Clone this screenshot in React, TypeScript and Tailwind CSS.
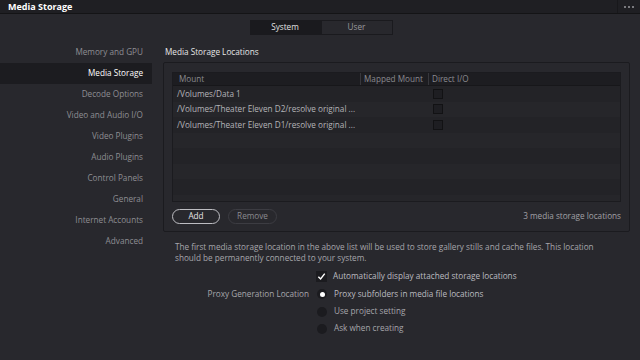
import React from "react";

const sidebarItems = [
  "Memory and GPU",
  "Media Storage",
  "Decode Options",
  "Video and Audio I/O",
  "Video Plugins",
  "Audio Plugins",
  "Control Panels",
  "General",
  "Internet Accounts",
  "Advanced",
];

const mounts = [
  "/Volumes/Data 1",
  "/Volumes/Theater Eleven D2/resolve original ...",
  "/Volumes/Theater Eleven D1/resolve original ...",
];

// radio / checkbox for the options block
const Radio: React.FC<{ on?: boolean }> = ({ on }) => (
  <span className="w-[10px] h-[10px] rounded-full bg-[#1b1b1f] flex items-center justify-center">
    {on && <span className="w-[5px] h-[5px] rounded-full bg-white" />}
  </span>
);

const App: React.FC = () => {
  return (
    <div
      className="w-[640px] h-[360px] bg-[#28282d] flex flex-col overflow-hidden text-[8.2px] leading-none"
      style={{ fontFamily: '"Open Sans", sans-serif' }}
    >
      {/* Title bar */}
      <div className="h-[14px] bg-[#1f1f23] border-b border-[#141416] flex items-center justify-between">
        <span className="pl-[8px] text-[9px] font-bold text-white">Media Storage</span>
        <div className="h-full w-[23px] border-l border-[#18181b] flex items-center justify-center gap-[2px]">
          <span className="w-[2px] h-[2px] rounded-full bg-[#9a9a9e]" />
          <span className="w-[2px] h-[2px] rounded-full bg-[#9a9a9e]" />
          <span className="w-[2px] h-[2px] rounded-full bg-[#9a9a9e]" />
        </div>
      </div>

      {/* Tabs */}
      <div className="flex justify-center mt-[6px] pl-[2px]">
        <div className="w-[71px] h-[15px] bg-[#1a1a1e] text-[#e0e0e0] flex items-center justify-center">System</div>
        <div className="w-[72px] h-[15px] border border-[#1a1a1e] text-[#9a9a9e] flex items-center justify-center">User</div>
      </div>

      <div className="flex mt-[6px]">
        {/* Sidebar */}
        <div className="w-[152px] pt-[1px] flex flex-col">
          {sidebarItems.map((s) => (
            <div
              key={s}
              className={
                s === "Media Storage"
                  ? "h-[21px] flex items-center justify-end pr-[9px] bg-[#1c1c20] text-white"
                  : "h-[21px] flex items-center justify-end pr-[9px] text-[#8e8e93]"
              }
            >
              {s}
            </div>
          ))}
        </div>

        {/* Content */}
        <div className="flex-1 pl-[11px] pr-[10px]">
          <div className="h-[21px] pt-[2px] flex items-center pl-[2px] text-[#e6e6e6]">Media Storage Locations</div>
          <div className="w-[467px] h-[170px] border border-[#1b1b1f] rounded-[2px] px-[8px] pt-[9px]">
            <div className="h-[130px] bg-[#222226] border border-[#1b1b1f] flex flex-col overflow-hidden">
              <div className="h-[13px] shrink-0 bg-[#1d1d21] border-b border-[#17171a] flex text-[#8a8a8f]">
                <div className="w-[188px] pl-[6px] flex items-center border-r border-[#37373c]">Mount</div>
                <div className="w-[68px] pl-[3px] flex items-center border-r border-[#37373c]">Mapped Mount</div>
                <div className="pl-[3px] flex items-center">Direct I/O</div>
              </div>
              {Array.from({ length: 8 }).map((_, i) => (
                <div
                  key={i}
                  className={
                    i % 2 === 0
                      ? "h-[15.5px] shrink-0 flex items-center bg-[#232327] text-[#b4b4b8]"
                      : "h-[15.5px] shrink-0 flex items-center bg-[#26262a] text-[#b4b4b8]"
                  }
                >
                  <div className="w-[188px] pl-[4px] whitespace-nowrap">{mounts[i] ?? ""}</div>
                  <div className="w-[68px]" />
                  {i < 3 && <span className="ml-[4px] w-[10px] h-[10px] bg-[#1e1e22] border border-[#121214]" />}
                </div>
              ))}
            </div>
            <div className="flex items-center mt-[7px]">
              <div className="w-[48px] h-[15px] rounded-full border border-[#bdbdc2] text-[#e6e6e6] flex items-center justify-center">Add</div>
              <div className="ml-[8px] w-[49px] h-[15px] rounded-full border border-[#3c3c42] text-[#8a8a8f] flex items-center justify-center">Remove</div>
              <div className="ml-auto text-[#a0a0a5]">3 media storage locations</div>
            </div>
          </div>

          <div className="pl-[12px] mt-[9px] text-[#a6a6ab] leading-[11px]">
            The first media storage location in the above list will be used to store gallery stills and cache files. This location
            <br />
            should be permanently connected to your system.
          </div>

          <div className="mt-[4px] flex flex-col">
            <div className="h-[18px] flex items-center">
              <div className="w-[153px]" />
              <span className="w-[11px] h-[11px] bg-[#1b1b1f] flex items-center justify-center">
                <svg width="9" height="9" viewBox="0 0 10 10">
                  <path d="M1.5 5.2 L4 7.8 L8.6 1.8" fill="none" stroke="#fff" strokeWidth="1.6" />
                </svg>
              </span>
              <span className="ml-[6px] text-[#bcbcc0]">Automatically display attached storage locations</span>
            </div>
            <div className="h-[18px] flex items-center">
              <div className="w-[146px] text-right text-[#a6a6ab]">Proxy Generation Location</div>
              <div className="w-[8px]" />
              <Radio on />
              <span className="ml-[7px] text-[#bcbcc0]">Proxy subfolders in media file locations</span>
            </div>
            <div className="h-[17px] flex items-center">
              <div className="w-[154px]" />
              <Radio />
              <span className="ml-[7px] text-[#a6a6ab]">Use project setting</span>
            </div>
            <div className="h-[17px] flex items-center">
              <div className="w-[154px]" />
              <Radio />
              <span className="ml-[7px] text-[#a6a6ab]">Ask when creating</span>
            </div>
          </div>
        </div>
      </div>
    </div>
  );
};

export default App;
